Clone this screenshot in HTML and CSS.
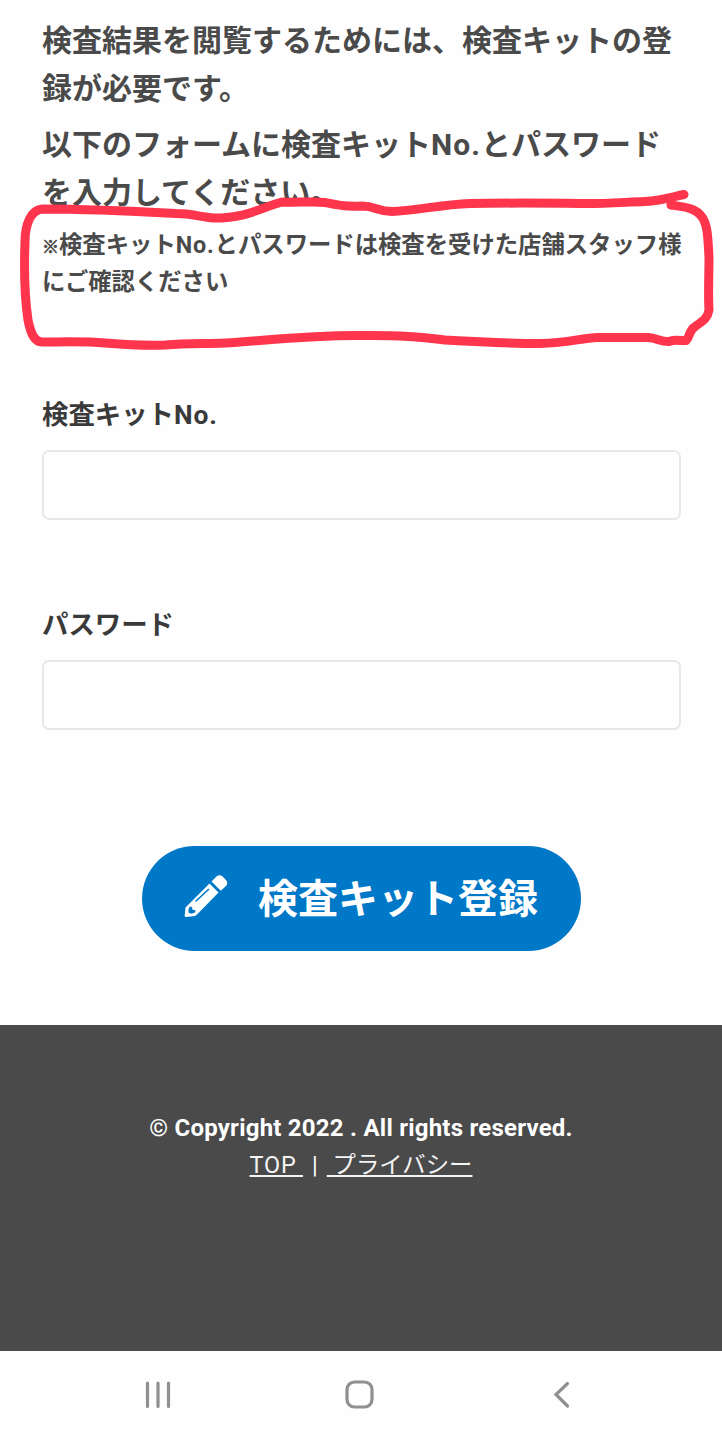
FILE: index.html
```html
<!DOCTYPE html>
<html lang="ja">
<head>
	<meta charset="utf-8">
	<title>検査キット登録</title>
	<link rel="stylesheet" href="styles.css">
</head>
<body>

<main class="content">
	<p class="lead">検査結果を閲覧するためには、検査キットの登<br>録が必要です。</p>
	<p class="lead">以下のフォームに検査キット<span class="latin">No.</span>とパスワード<br>を入力してください。</p>
	<p class="note"><span class="mark">※</span>検査キット<span class="latin">No.</span>とパスワードは検査を受けた店舗スタッフ様<br>にご確認ください</p>

	<form class="kitForm">
		<div class="field">
			<label for="kitNo">検査キット<span class="latin">No.</span></label>
			<input type="text" id="kitNo">
		</div>
		<div class="field">
			<label for="password">パスワード</label>
			<input type="password" id="password">
		</div>
		<button type="button" class="submit">
			<svg class="pencil" width="44" height="44" viewBox="0 0 44 44">
				<path fill="#fff" d="M25.500 9.500 34.500 18.500 14 39.500 11 42 2 43Q.5 43 .7 41.500L1.500 33.500 4 31Z"/>
				<path fill="#fff" d="M27.500 7.500 32.500 2.500Q35.500 0 38.500 2.500L42 6Q44.500 9 42 12L36.800 16.800Z"/>
				<path fill="none" stroke="#0078c8" stroke-width="1.600" stroke-linecap="round" d="M12 27 24.500 15.500"/>
				<path fill="#0078c8" d="M4.500 35 6 32.500 8 33 8.500 35.800 11.500 36.300 11 38.500 7.500 39.800 4.500 38.500Z"/>
			</svg>
			<span>検査キット登録</span>
		</button>
	</form>

	<!-- hand-drawn marker around the note -->
	<svg class="marker" width="722" height="180" viewBox="0 180 722 180">
		<path d="M684 194.500C672 197 662 200.500 645 201.500C620 202.500 600 204 580 203.500C540 203 500 203 470 203.500C440 204.500 415 211 392 211.500C378 211.500 375 206 362 206C345 207 338 205 325 202.500C312 201 295 203 282 202C262 207 248 218 214 218C200 217 192 213.500 176 213.500C130 211 80 209 42 209C31 210 25 224 25 242C24 270 25 300 28 320C31 335 35 342 42 342C60 342 85 341 105 343C130 345 145 346 165 345C190 343 205 344 225 343C260 341 310 335 361 335.500C400 335 420 337 445 340C480 342 510 343.500 540 343.500C570 343 580 338 598 337.500L648 337.500C657 338 661 342 669 341.500C676 339 680 341 686 340.500C690 337 689 331 694 327.500C700 322 707 321 709 310C708 295 709 275 709 258C708 240 708 225 702 217C696 208 685 207 671 205"/>
	</svg>
</main>

<footer class="footer">
	<p class="copyright">© Copyright 2022 . All rights reserved.</p>
	<p class="links"><a href="#" class="top">TOP&nbsp;</a><span class="sep">|</span><a href="#">&nbsp;プライバシー</a></p>
</footer>

<nav class="navbar">
	<svg width="30" height="30" viewBox="0 0 30 30">
		<path d="M4.500 3v23.500M15 3v23.500M25.500 3v23.500"/>
	</svg>
	<svg width="30" height="30" viewBox="0 0 30 30">
		<rect x="2" y="2" width="25" height="25" rx="7.500"/>
	</svg>
	<svg width="30" height="30" viewBox="0 0 30 30">
		<path d="M21.500 3.500 10 14.500 21.500 26"/>
	</svg>
</nav>

</body>
</html>
```

FILE: styles.css
```css
* {
	box-sizing: border-box;
}
body {
	margin: 0;
	background: #fefefe;
	color: #4a4a4a;
	font-family: Roboto,"Noto Sans CJK JP",sans-serif;
}
p {
	margin: 0;
	white-space: nowrap;
}

.content {
	position: relative;
	height: 1025px;
	padding: 17px 41px 0 42px;
}
.lead {
	margin-bottom: 8px;
	font-size: 30px;
	font-weight: bold;
	line-height: 48px;
}
.latin {
	letter-spacing: .035em;
}
.note {
	height: 80px;
	padding-top: 2px;
	font-size: 23.35px;
	font-weight: bold;
	line-height: 36.5px;
}
.mark {
	display: inline-block;
	width: 17px;
	font-size: 17px;
	line-height: 1;
	-webkit-text-stroke: .7px #4a4a4a;
}
.marker {
	position: absolute;
	top: 180px;
	left: 0;
	fill: none;
	stroke: #ff354d;
	stroke-width: 9;
	stroke-linecap: round;
	stroke-linejoin: round;
	pointer-events: none;
}

.kitForm {
	display: flex;
	flex-direction: column;
	padding-top: 88px;
}
.field {
	display: flex;
	flex-direction: column;
	height: 210px;
}
.field label {
	height: 57px;
	color: #3a3a3a;
	font-size: 26.4px;
	font-weight: bold;
	line-height: 44px;
}
.field input {
	width: 639px;
	height: 70px;
	border: 2px solid #e8e8e8;
	border-radius: 7px;
	background: #fefefe;
}
.submit {
	display: flex;
	align-items: center;
	align-self: center;
	width: 439px;
	height: 105px;
	margin-top: 33px;
	padding: 3px 0 0 42px;
	border: 0;
	border-radius: 53px;
	background: #0078c8;
	color: #fff;
	font-family: inherit;
	font-size: 40px;
	font-weight: bold;
	line-height: 60px;
}
.pencil {
	margin: 0 30px 9px 0;
}

.footer {
	height: 326px;
	padding-top: 85px;
	background: #4a4a4a;
	color: #fff;
	font-size: 24px;
	line-height: 37px;
	text-align: center;
}
.copyright {
	font-weight: bold;
	letter-spacing: .23px;
}
.links {
	font-size: 23.4px;
}
.links a {
	color: #f4f4f4;
	text-decoration: underline;
}
.links .top {
	letter-spacing: .8px;
}
.sep {
	margin: 0 9px;
}

.navbar {
	display: flex;
	justify-content: space-between;
	height: 84px;
	padding: 29px 146px 0 143px;
}
.navbar svg {
	fill: none;
	stroke: #909090;
	stroke-width: 3.2;
	stroke-linecap: round;
}
```
